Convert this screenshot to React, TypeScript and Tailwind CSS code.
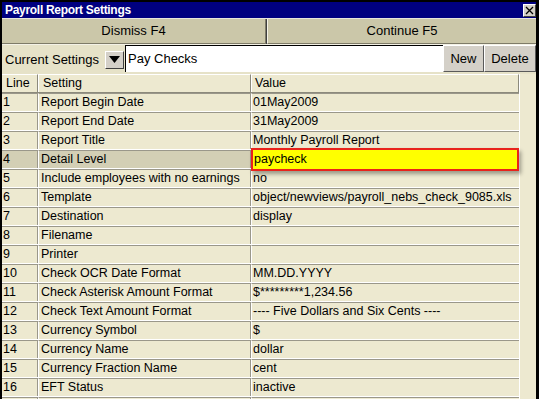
import React from "react";

const rows: [string, string, string][] = [
  ["1", "Report Begin Date", "01May2009"],
  ["2", "Report End Date", "31May2009"],
  ["3", "Report Title", "Monthly Payroll Report"],
  ["4", "Detail Level", "paycheck"],
  ["5", "Include employees with no earnings", "no"],
  ["6", "Template", "object/newviews/payroll_nebs_check_9085.xls"],
  ["7", "Destination", "display"],
  ["8", "Filename", ""],
  ["9", "Printer", ""],
  ["10", "Check OCR Date Format", "MM.DD.YYYY"],
  ["11", "Check Asterisk Amount Format", "$*********1,234.56"],
  ["12", "Check Text Amount Format", "---- Five Dollars and Six Cents ----"],
  ["13", "Currency Symbol", "$"],
  ["14", "Currency Name", "dollar"],
  ["15", "Currency Fraction Name", "cent"],
  ["16", "EFT Status", "inactive"],
  ["", "", ""],
];

const font = { fontFamily: '"Liberation Sans", Arial, sans-serif' };

export default function App() {
  return (
    <div className="w-[539px] h-[399px] bg-black overflow-hidden pl-[2px] pt-[2px]" style={font}>
      <div className="w-[534px] h-[397px] flex flex-col bg-[#ede9d0] overflow-hidden">
        {/* Title bar */}
        <div className="h-[16px] shrink-0 bg-[#000080] flex items-center justify-between pl-[3px]">
          <span className="text-white font-bold text-[12px] leading-none tracking-[-0.3px]">Payroll Report Settings</span>
          <div className="w-[13px] h-[13px] bg-[#d4d0c8] border-t border-l border-white border-r border-b border-r-[#404040] border-b-[#404040] flex items-center justify-center">
            <svg width="9" height="9" viewBox="0 0 9 9">
              <path d="M1 1 L8 8 M8 1 L1 8" stroke="black" strokeWidth="1.3" />
            </svg>
          </div>
        </div>

        {/* Dismiss / Continue */}
        <div className="h-[26px] shrink-0 flex bg-[#808080] border-t border-[#e8e6dc]">
          <button className="w-[264px] h-full bg-[#cbc7a9] border-r border-b border-[#7e7b68] text-[13px] text-black">
            Dismiss F4
          </button>
          <div className="w-[1px] bg-[#404040]" />
          <button className="flex-1 h-full bg-[#cbc7a9] border-l border-[#f4f2e6] border-b border-b-[#7e7b68] text-[13px] text-black">
            Continue F5
          </button>
        </div>

        {/* Current settings row */}
        <div className="h-[30px] shrink-0 flex items-stretch bg-[#e6e2c8] border-t border-[#f4f2e6]">
          <div className="w-[103px] flex items-center pl-[3px] text-[13px] text-black">Current Settings</div>
          <div className="w-[20px] flex items-center">
            <div className="w-[19px] h-[18px] bg-[#d4d0c8] border-t border-l border-white border-r border-b border-r-[#404040] border-b-[#404040] flex items-center justify-center">
              <svg width="11" height="7" viewBox="0 0 11 7">
                <path d="M0 0 L11 0 L5.5 7 Z" fill="black" />
              </svg>
            </div>
          </div>
          <div className="w-[318px] bg-white border-l border-t border-black flex items-center pl-[2px] text-[13px] text-black mb-[2px]">
            Pay Checks
          </div>
          <button className="w-[41px] h-[27px] bg-[#d4d0c8] border-t border-l border-white border-r border-b border-r-[#5a5a5a] border-b-[#5a5a5a] text-[13px] text-black">
            New
          </button>
          <button className="flex-1 h-[27px] bg-[#d4d0c8] border-t border-l border-white border-r border-b border-r-[#5a5a5a] border-b-[#5a5a5a] text-[13px] text-black">
            Delete
          </button>
        </div>

        {/* Grid */}
        <div className="flex-1 min-h-0 flex overflow-hidden">
          <div className="w-[517px] flex flex-col text-[12.5px] text-black">
            <div className="h-[19px] shrink-0 flex border-b border-[#8c8a7c]">
              <div className="w-[36px] pl-[4px] flex items-center border-r border-[#8c8a7c] border-t border-t-white">Line</div>
              <div className="w-[213px] pl-[4px] flex items-center border-l border-white border-r border-r-[#8c8a7c] border-t border-t-white">Setting</div>
              <div className="flex-1 pl-[3px] flex items-center border-l border-white border-r border-r-[#8c8a7c] border-t border-t-white">Value</div>
            </div>
            {rows.map(([n, s, v], i) => {
              const hi = n === "4";
              return (
                <div key={i} className={`h-[19px] flex shrink-0 border-b border-white ${hi ? "bg-[#d3cfb5]" : ""}`}>
                  <div className="w-[36px] pl-[1px] flex items-center border-t border-[#9a978a] border-r border-r-[#9a978a]">{n}</div>
                  <div className="w-[213px] pl-[2px] flex items-center border-t border-[#9a978a] border-l border-l-white border-r border-r-[#9a978a] whitespace-nowrap">{s}</div>
                  <div className="relative flex-1 pl-[1px] flex items-center border-t border-[#9a978a] border-l border-l-white whitespace-nowrap">
                    {hi ? (
                      <div className="absolute left-[-1px] top-[-3px] w-[268px] h-[23px] bg-[#ffff00] border-2 border-[#e8231c] flex items-center pl-[1px] shadow-[2px_3px_4px_rgba(0,0,0,0.35)] z-10">
                        {v}
                      </div>
                    ) : (
                      v
                    )}
                  </div>
                </div>
              );
            })}
          </div>
          <div className="w-[1px] bg-white" />
          <div className="flex-1 bg-[#ede9d0]" />
        </div>
      </div>
    </div>
  );
}
